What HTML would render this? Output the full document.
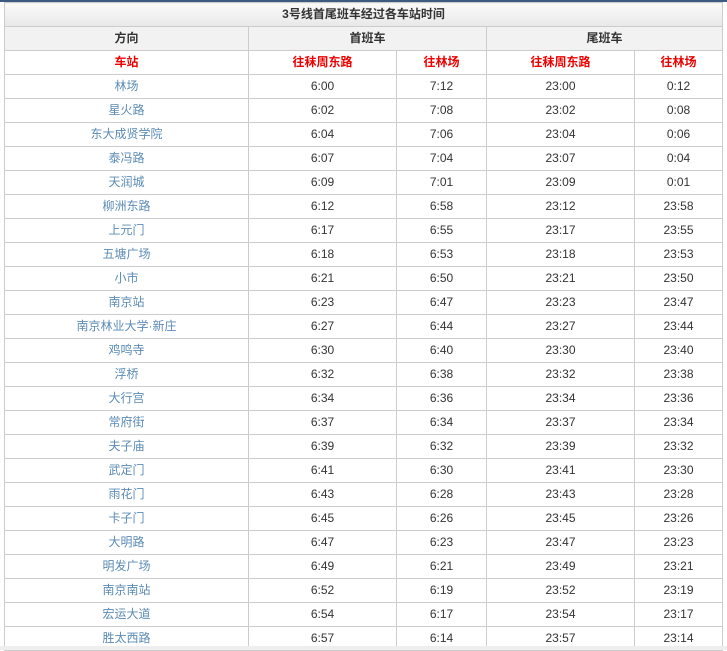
<!DOCTYPE html>
<html><head><meta charset="utf-8"><style>
body{margin:0;width:727px;height:650px;background:#fff;overflow:hidden;font-family:"Liberation Sans","Noto Sans CJK SC",sans-serif;font-size:12px;color:#333}
.top{position:absolute;left:0;top:0;width:727px;height:2px;background:#3d5a80}
.bot{position:absolute;left:0;top:646px;width:727px;height:4px;background:#eee}
table{position:absolute;left:4px;top:2px;border-collapse:collapse;width:718px;table-layout:fixed}
td{border:1px solid #ccc;text-align:center;height:23px;padding:0;line-height:23px}
.t td{background:linear-gradient(#fafafa,#e8e8e8);font-weight:bold;font-size:12px}
.h td{background:#f2f2f2;font-weight:bold}
.r td{color:#e00;font-weight:bold}
td.s{color:#5b8bb5}
</style></head><body>
<div class="top"></div>
<table>
<col style="width:244px"><col style="width:148px"><col style="width:90px"><col style="width:148px"><col style="width:88px">
<tr class="t"><td colspan="5">3号线首尾班车经过各车站时间</td></tr>
<tr class="h"><td>方向</td><td colspan="2">首班车</td><td colspan="2">尾班车</td></tr>
<tr class="r"><td>车站</td><td>往秣周东路</td><td>往林场</td><td>往秣周东路</td><td>往林场</td></tr>
<tr><td class="s">林场</td><td>6:00</td><td>7:12</td><td>23:00</td><td>0:12</td></tr>
<tr><td class="s">星火路</td><td>6:02</td><td>7:08</td><td>23:02</td><td>0:08</td></tr>
<tr><td class="s">东大成贤学院</td><td>6:04</td><td>7:06</td><td>23:04</td><td>0:06</td></tr>
<tr><td class="s">泰冯路</td><td>6:07</td><td>7:04</td><td>23:07</td><td>0:04</td></tr>
<tr><td class="s">天润城</td><td>6:09</td><td>7:01</td><td>23:09</td><td>0:01</td></tr>
<tr><td class="s">柳洲东路</td><td>6:12</td><td>6:58</td><td>23:12</td><td>23:58</td></tr>
<tr><td class="s">上元门</td><td>6:17</td><td>6:55</td><td>23:17</td><td>23:55</td></tr>
<tr><td class="s">五塘广场</td><td>6:18</td><td>6:53</td><td>23:18</td><td>23:53</td></tr>
<tr><td class="s">小市</td><td>6:21</td><td>6:50</td><td>23:21</td><td>23:50</td></tr>
<tr><td class="s">南京站</td><td>6:23</td><td>6:47</td><td>23:23</td><td>23:47</td></tr>
<tr><td class="s">南京林业大学·新庄</td><td>6:27</td><td>6:44</td><td>23:27</td><td>23:44</td></tr>
<tr><td class="s">鸡鸣寺</td><td>6:30</td><td>6:40</td><td>23:30</td><td>23:40</td></tr>
<tr><td class="s">浮桥</td><td>6:32</td><td>6:38</td><td>23:32</td><td>23:38</td></tr>
<tr><td class="s">大行宫</td><td>6:34</td><td>6:36</td><td>23:34</td><td>23:36</td></tr>
<tr><td class="s">常府街</td><td>6:37</td><td>6:34</td><td>23:37</td><td>23:34</td></tr>
<tr><td class="s">夫子庙</td><td>6:39</td><td>6:32</td><td>23:39</td><td>23:32</td></tr>
<tr><td class="s">武定门</td><td>6:41</td><td>6:30</td><td>23:41</td><td>23:30</td></tr>
<tr><td class="s">雨花门</td><td>6:43</td><td>6:28</td><td>23:43</td><td>23:28</td></tr>
<tr><td class="s">卡子门</td><td>6:45</td><td>6:26</td><td>23:45</td><td>23:26</td></tr>
<tr><td class="s">大明路</td><td>6:47</td><td>6:23</td><td>23:47</td><td>23:23</td></tr>
<tr><td class="s">明发广场</td><td>6:49</td><td>6:21</td><td>23:49</td><td>23:21</td></tr>
<tr><td class="s">南京南站</td><td>6:52</td><td>6:19</td><td>23:52</td><td>23:19</td></tr>
<tr><td class="s">宏运大道</td><td>6:54</td><td>6:17</td><td>23:54</td><td>23:17</td></tr>
<tr><td class="s">胜太西路</td><td>6:57</td><td>6:14</td><td>23:57</td><td>23:14</td></tr>
</table>
<div class="bot"></div>
</body></html>
